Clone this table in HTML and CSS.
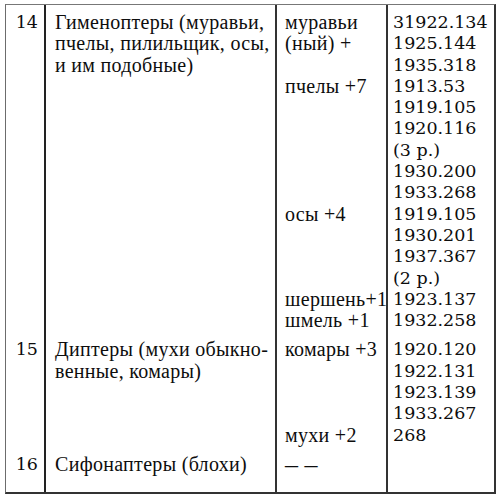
FILE: index.html
```html
<!DOCTYPE html>
<html lang="ru">
<head>
<meta charset="utf-8">
<link rel="stylesheet" href="styles.css">
</head>
<body>
<table class="tbl">
  <colgroup>
    <col class="c-num">
    <col class="c-name">
    <col class="c-kind">
    <col class="c-ref">
  </colgroup>
  <tr class="row">
    <td class="num">14</td>
    <td class="name">Гименоптеры (муравьи,<br>пчелы, пилильщик, осы,<br>и им подобные)</td>
    <td class="kind"><div>муравьи</div><div>(ный) +</div><div class="gap1"></div><div>пчелы +7</div><div class="gap5"></div><div>осы +4</div><div class="gap3"></div><div>шершень+1</div><div>шмель +1</div></td>
    <td class="ref"><div>31922.134</div><div>1925.144</div><div>1935.318</div><div>1913.53</div><div>1919.105</div><div>1920.116</div><div>(3 р.)</div><div>1930.200</div><div>1933.268</div><div>1919.105</div><div>1930.201</div><div>1937.367</div><div>(2 р.)</div><div>1923.137</div><div>1932.258</div></td>
  </tr>
  <tr class="row">
    <td class="num">15</td>
    <td class="name">Диптеры (мухи обыкно-<br>венные, комары)</td>
    <td class="kind"><div>комары +3</div><div class="gap3"></div><div>мухи +2</div></td>
    <td class="ref"><div>1920.120</div><div>1922.131</div><div>1923.139</div><div>1933.267</div><div>268</div></td>
  </tr>
  <tr class="row last">
    <td class="num">16</td>
    <td class="name">Сифонаптеры (блохи)</td>
    <td class="kind"><div class="dash">– –</div></td>
    <td class="ref"></td>
  </tr>
</table>
</body>
</html>
```

FILE: styles.css
```css
html, body {
  margin: 0;
  padding: 0;
  background: #fff;
}
body {
  padding: 4px 0 0 5px;
  font-family: "Liberation Serif", "DejaVu Serif", serif;
  font-size: 20px;
  line-height: 21.3px;
  color: #0d0d0d;
}
.tbl {
  border-collapse: separate;
  border-spacing: 0;
  table-layout: fixed;
  width: 490px;
  border-top: 1px solid #777;
  border-left: 1px solid #6c6c6c;
  border-right: 2px solid #333;
  border-bottom: 2px solid #333;
}
.c-num { width: 40px; }
.c-name { width: 231px; }
.c-kind { width: 111px; }
.c-ref { width: 106px; }
.tbl td {
  vertical-align: top;
  padding: 7px 0 1px 0;
  white-space: nowrap;
}
.row.last td {
  padding-bottom: 17px;
}
.num {
  text-align: right;
  padding-right: 6px !important;
  font-family: "DejaVu Serif", serif;
  font-size: 17.5px;
  border-right: 2px solid #222;
}
.name {
  padding-left: 9px !important;
  letter-spacing: 0.3px;
  border-right: 2px solid #333;
}
.kind {
  padding-left: 8px !important;
  letter-spacing: 0.3px;
  border-right: 2px solid #333;
}
.dash {
  font-size: 26px;
  letter-spacing: 0;
}
.ref {
  padding-left: 5px !important;
  font-family: "DejaVu Serif", serif;
  font-size: 17.5px;
}
.gap1 { height: 21.3px; }
.gap3 { height: 63.9px; }
.gap5 { height: 106.5px; }
```
